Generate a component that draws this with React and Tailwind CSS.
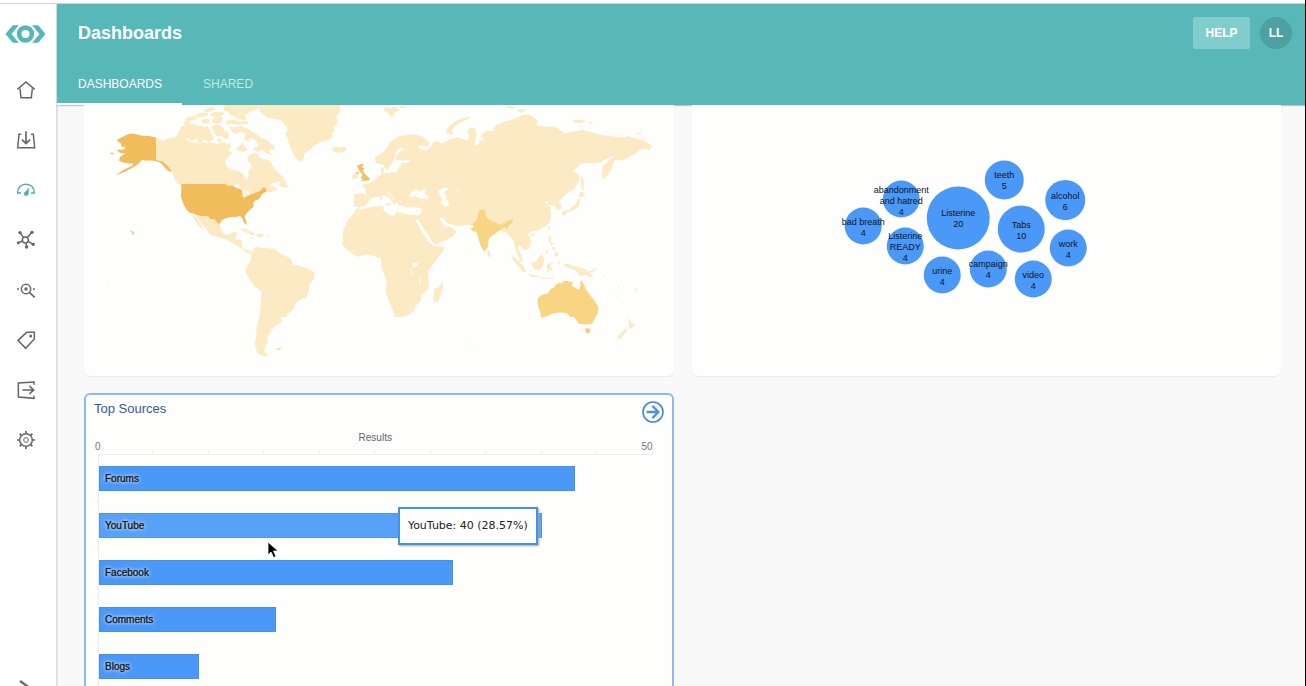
import React from "react";

const LAND = "#fbeac3";
const US = "#f1bc5c";
const MID = "#f8d583";
const SEA = "#fefefd";

const NAV = [
  {
    label: "Home",
    box: "48 237 60 60",
    art: (
      <>
        <path d="M52 265 78 243l26 22" />
        <path d="M60 263l3 27h31l3-27" />
      </>
    ),
  },
  {
    label: "Inbox",
    box: "48 387 60 60",
    art: (
      <>
        <path d="M64 400h-7l-4 40h51l-4-40h-7" />
        <path d="M78 391v37M66 416l12 12 12-12" strokeWidth="5" />
      </>
    ),
  },
  {
    label: "Dashboards",
    box: "48 540 60 60",
    active: true,
    art: (
      <>
        <path d="M63 579H53c-1-16 10-26 25-26s26 10 25 26H93" />
        <path d="M87 563l-2 20c-2 6-12 6-13-1 0-3 2-5 4-6z" fill="currentColor" strokeWidth="1" />
      </>
    ),
  },
  {
    label: "Network",
    box: "48 60 60 60",
    art: (
      <>
        <circle cx="76" cy="90" r="9" />
        <path d="M70 82 60 68M82 82l14-15M84 94l16 9M78 99l2 12M67 93l-12 5" />
        <g fill="currentColor" stroke="none">
          <circle cx="60" cy="68" r="5" />
          <circle cx="96" cy="67" r="5" />
          <circle cx="100" cy="103" r="5" />
          <circle cx="80" cy="111" r="5" />
          <circle cx="55" cy="98" r="4.5" />
        </g>
      </>
    ),
  },
  {
    label: "Search",
    box: "48 210 60 60",
    art: (
      <>
        <circle cx="78" cy="237" r="14" />
        <path d="M88 247l16 15" strokeWidth="5" />
        <g fill="currentColor" stroke="none">
          <circle cx="78" cy="237" r="5" />
          <circle cx="54" cy="237" r="3" />
          <circle cx="102" cy="237" r="3" />
        </g>
      </>
    ),
  },
  {
    label: "Tags",
    box: "48 360 60 60",
    art: (
      <>
        <path d="M54 391l26-24h23v20l-26 28z" />
        <circle cx="92" cy="378" r="4.5" fill="currentColor" stroke="none" />
      </>
    ),
  },
  {
    label: "Export",
    box: "48 512 60 60",
    art: (
      <>
        <path d="M102 526v-8l-47 3v42l47 4v-8" />
        <path d="M67 542h33M88 530l13 12-13 12" strokeWidth="5" />
      </>
    ),
  },
  {
    label: "Settings",
    box: "48 663 60 60",
    art: (
      <>
        <circle cx="78" cy="693" r="19" />
        <circle cx="78" cy="693" r="7" strokeWidth="3" />
        <path
          d="M78 673v-7M78 713v7M58 693h-7M98 693h7M64 679l-5-5M92 679l5-5M64 707l-5 5M92 707l5 5"
          strokeWidth="5"
        />
      </>
    ),
  },
];

const BUBBLES = [
  { x: 901, y: 199, r: 18.5, t: 190, lines: ["abandonment", "and hatred", "4"] },
  { x: 863, y: 226, r: 18.5, t: 222, lines: ["bad breath", "4"] },
  { x: 905, y: 246, r: 18.5, t: 236, lines: ["Listerine", "READY", "4"] },
  { x: 958, y: 218, r: 31.5, t: 213, lines: ["Listerine", "20"] },
  { x: 1004, y: 180, r: 19.5, t: 175, lines: ["teeth", "5"] },
  { x: 1021, y: 229, r: 23.5, t: 225, lines: ["Tabs", "10"] },
  { x: 1065, y: 200, r: 20, t: 196, lines: ["alcohol", "6"] },
  { x: 1068, y: 248, r: 18.5, t: 244, lines: ["work", "4"] },
  { x: 988, y: 269, r: 18.5, t: 264, lines: ["campaign", "4"] },
  { x: 942, y: 275, r: 18.5, t: 271, lines: ["urine", "4"] },
  { x: 1033, y: 279, r: 18.5, t: 275, lines: ["video", "4"] },
];

const MAX = 50;
const SOURCES = [
  { name: "Forums", value: 43 },
  { name: "YouTube", value: 40, hover: "YouTube: 40 (28.57%)" },
  { name: "Facebook", value: 32 },
  { name: "Comments", value: 16 },
  { name: "Blogs", value: 9 },
];

function Logo() {
  return (
    <svg viewBox="15 70 122 60" className="h-5 w-[41px]" fill="#56b7b8" aria-hidden="true">
      <path d="M38 74h18L34 100l22 26H38L16 100z" />
      <path d="M114 74H96l22 26-22 26h18l22-26z" />
      <circle cx="76" cy="100" r="28" fill="#fff" />
      <circle cx="76" cy="100" r="19" fill="none" stroke="#56b7b8" strokeWidth="14" />
    </svg>
  );
}

function Sidebar() {
  return (
    <aside className="flex w-[57px] shrink-0 flex-col border-r border-[#dcdcdc] bg-white">
      <a href="#top" aria-label="Overview" className="flex h-[61px] w-[51px] shrink-0 items-start justify-center pt-5">
        <Logo />
      </a>
      <nav className="flex flex-col" aria-label="Main">
        {NAV.map((n) => (
          <a
            key={n.label}
            href="#top"
            aria-label={n.label}
            className={
              "flex h-[50px] w-[52px] items-center justify-center " +
              (n.active ? "text-[#4fb0b2]" : "text-[#666]")
            }
          >
            <svg viewBox={n.box} className="size-5" fill="none" stroke="currentColor" strokeWidth="4.5">
              {n.art}
            </svg>
          </a>
        ))}
      </nav>
      <button type="button" aria-label="Expand menu" className="mt-auto flex h-[6px] w-[50px] items-start justify-center overflow-hidden">
        <svg viewBox="0 0 12 12" className="size-3 shrink-0" fill="none" stroke="#6b6b6b" strokeWidth="2.4">
          <path d="M1 1l7 5-7 5" />
        </svg>
      </button>
    </aside>
  );
}

function Header() {
  return (
    <header className="z-10 shrink-0 bg-[#58b8b8] text-white shadow-[0_1px_1px_#c4c4c4]">
      <div className="flex h-[58px] items-center justify-between pr-[13px] pl-[21px]">
        <h1 className="text-[18px] leading-6 font-bold">Dashboards</h1>
        <div className="flex items-center gap-[10px]">
          <button type="button" className="h-8 w-[57px] rounded-[2px] bg-[#81cccd] text-[12px] font-bold">
            HELP
          </button>
          <button type="button" className="size-8 rounded-full bg-[#4da1a2] text-[12px] font-bold">
            LL
          </button>
        </div>
      </div>
      <nav className="flex h-[43px] text-[12px]" aria-label="Views">
        <a href="#dashboards" className="flex items-center border-b-2 border-white pt-[2px] pr-5 pl-[21px]">
          DASHBOARDS
        </a>
        <a href="#shared" className="flex items-center border-b-2 border-transparent pt-[2px] pr-5 pl-[21px] text-[#bfe8e6]">
          SHARED
        </a>
      </nav>
    </header>
  );
}

function WorldMap() {
  return (
    <svg viewBox="84 105 590 271" className="h-[271px] w-full" role="img" aria-label="Results by country">
      <g transform="translate(84 100) scale(.33333)" fill={LAND}>
        {/* Canada */}
        <path d="M214 112 225 117 240 121 255 113 270 112 282 104 292 108 305 118 320 125 335 128 350 122 362 128 385 128 400 131 412 128 425 127 430 134 437 128 442 140 432 152 447 157 434 170 424 186 428 200 445 208 462 212 477 220 483 235 490 238 495 225 492 213 502 205 500 190 490 182 492 170 503 160 512 158 525 164 530 175 548 178 558 183 568 200 583 218 600 232 600 238 585 245 565 250 555 260 568 258 575 265 565 275 550 276 545 265 530 272 510 280 492 294 477 296 470 265 425 254 294 254 285 246 270 232 262 212 248 195 236 186 214 182Z" />
        <path d="M590 240 600 236 605 245 614 262 600 263 585 258ZM553 272 575 262 582 266 565 275 555 276ZM270 236 290 248 294 256 282 252Z" />
        <path d="M424 184 434 170 450 158 462 166 474 158 488 166 490 182 500 190 501 204 492 213 494 225 490 236 484 234 477 220 462 210 445 206 428 198Z" fill={SEA} />
        {/* Arctic islands */}
        <path d="M284 96l8-16 10-4 8-10 10 8 14-2 8 6 12-2 8 6 10-4 6 12 8 14 4 12-12 10-16-6-14 4-12-7-14 6-10-8-12 2-8-10-12-2z" />
        <path d="M296 72l8-8 12-2 6 6-12 6zM300 60l14-9 14-3 16 4-10 7-14 2-10 5zM330 48l10-8 16-3 18 3-4 7-16 4-10-2zM350 62l14-6 14 3-2 10-16 2zM358 32l14-8 20-2 2 8-18 4-8 4zM378 44l16-9 20 1 8 5-14 8-22 1zM384 60l10-8 14-3 10 4-4 12-12 6-14-2zM380 80l18-6 14 4 10 12-6 14-14 6-12-9-2-12zM412 106l10-14 10 4 4 14-10 8zM400 114l10 2 6 10-14 0z" />
        <path d="M418 15h112l-6 10-14 5-16 8-14 10 8 6-4 8-20-5-10-8-18-5-2-8-14-6z" />
        <path d="M428 62l16-4 20 6 26 0 6 6-24 4-22-2-22 1z" />
        <path d="M437 78 450 82 470 78 490 85 505 95 520 103 535 115 550 120 560 130 570 138 574 150 560 145 555 155 568 165 550 160 535 150 520 155 508 146 525 137 515 120 498 113 495 125 480 117 488 102 470 95 455 102 443 92Z" />
        <path d="M455 146 466 138 475 128 482 140 492 148 480 156 465 152Z" />
        {/* Greenland */}
        <path d="M528 15 770 15 768 35 758 50 763 68 748 80 753 92 743 100 748 112 733 120 708 127 688 140 678 150 663 160 657 182 648 184 635 172 625 155 615 130 612 115 605 100 612 90 605 75 590 60 565 55 550 52 535 40 524 25Z" />
        {/* Mexico and Central America */}
        <path d="M328 340 372 346 380 358 392 358 400 368 408 373 411 388 420 402 435 405 445 398 460 394 458 408 452 418 474 421 474 438 482 450 498 451 504 460 500 462 485 456 465 440 445 428 425 418 390 408 376 402 370 390 356 374 344 358Z" />
        <path d="M325 343 334 348 342 362 352 376 357 386 350 384 340 372 332 358Z" />
        <path d="M468 388l14-2 18 8 14 8-12 3-18-10zM520 401l14 0 8 6-12 5-12-3zM498 411l10 1-4 4zM548 408h7v3h-7z" />
        {/* United States */}
        <path
          fill={US}
          d="M292 252 425 252 433 257 450 256 466 263 474 272 476 290 480 294 492 288 510 280 530 272 538 262 547 265 547 275 535 282 530 290 525 298 515 301 508 308 510 320 500 328 488 340 482 350 487 363 488 375 480 368 475 354 468 348 455 352 440 351 430 353 418 358 410 365 408 373 400 368 392 358 380 358 372 348 350 348 330 341 315 337 305 325 297 308 291 290 292 270Z"
        />
        <path
          fill={US}
          d="M147 100 160 103 175 107 195 108 216 112 216 180 236 184 250 196 264 214 258 216 245 205 230 188 216 183 200 181 185 182 175 178 165 190 150 201 130 211 110 220 100 222 120 208 145 197 148 190 136 190 120 188 105 182 108 170 124 160 108 158 98 150 120 148 125 140 112 140 112 131 98 122 105 115 125 106 135 102Z"
        />
        <path fill={US} d="M78 159l9-1 4 4-8 1zM96 222l6-1-2 4zM137 393l8 1 7 8-5 3-2-7z" />
        <path fill={SEA} d="M446 258l14-6 12 10-8 4zM478 268l5 0 2 18-5 4zM486 272l12 2-4 10-6-4z" />
      </g>
      {/* South America */}
      <g transform="translate(84 230) scale(.33333)" fill={LAND}>
        <path d="M503 66 512 54 525 49 530 55 545 54 572 57 590 72 605 78 620 85 626 100 640 107 660 112 680 119 693 130 690 147 676 165 675 185 668 203 655 207 637 218 630 235 615 250 605 263 588 262 595 270 590 280 572 290 568 298 557 298 565 302 556 312 549 325 553 335 545 347 541 365 556 376 542 380 520 369 513 342 517 315 519 288 527 255 531 220 534 185 512 170 500 152 486 128 488 108 500 95Z" />
        <path d="M578 355l12-2 1 5-11 3zM72 162h3v2h-3z" fill="#f7dca0" />
        <path d="M620 103l8-3 5 6-8 3zM536 172l6 1 0 6z" fill={SEA} opacity=".6" />
      </g>
      {/* Europe, Africa, Asia and Oceania */}
      <g transform="translate(300 100) scale(.33333)" fill={LAND}>
        <path d="M163 283 185 280 200 284 198 264 184 255 200 252 212 248 225 240 235 228 246 224 243 210 243 200 252 204 252 220 265 218 290 217 297 203 305 195 302 188 318 189 332 183 330 178 305 182 290 180 288 165 300 155 315 148 308 143 296 146 288 158 283 175 275 192 265 208 257 208 250 193 240 192 228 188 226 170 245 160 260 145 275 123 300 108 325 104 350 103 370 110 388 127 385 140 360 138 352 136 365 150 382 150 390 142 398 136 400 128 412 122 425 130 450 118 475 112 500 120 508 118 505 90 515 82 528 86 530 108 524 133 532 138 538 130 540 120 553 122 545 104 560 92 578 94 590 74 615 64 640 58 670 45 690 44 715 62 710 75 740 80 765 80 785 92 795 101 815 95 850 90 890 100 915 106 940 109 972 112 982 108 1010 115 1035 123 1057 138 1050 152 1035 145 1020 150 1008 162 990 170 970 181 945 180 940 195 935 210 925 225 912 238 906 225 908 200 925 184 942 168 936 168 920 177 900 188 875 188 845 190 818 215 838 222 840 238 825 265 805 278 785 298 778 306 786 318 784 328 772 330 768 318 755 315 740 312 748 304 742 303 735 308 752 320 755 345 752 365 735 380 715 392 695 394 686 402 695 425 690 442 676 452 665 440 656 435 656 450 666 465 670 485 662 482 652 460 646 440 642 420 630 410 622 398 602 392 560 395 530 390 520 378 500 375 470 378 445 372 430 360 422 352 420 356 435 380 452 380 470 395 458 410 440 420 405 434 398 425 382 400 370 388 355 360 350 348 362 345 366 324 345 322 320 322 304 316 302 300 296 300 308 318 296 316 285 296 268 276 262 280 285 298 292 305 282 314 270 295 250 284 240 290 225 290 212 296 206 306 195 318 175 322 163 318Z" />
        <path d="M172 325 190 328 215 320 250 318 252 332 270 345 284 348 290 336 305 338 330 346 352 344 358 362 375 390 388 418 400 438 434 440 430 452 410 480 384 514 386 532 387 565 365 585 362 605 350 615 342 632 328 645 300 652 286 652 279 630 268 605 257 575 262 545 244 500 244 476 230 471 203 462 175 470 155 460 128 435 130 390 145 360 160 342Z" />
        {/* Inland seas */}
        <g fill={SEA}>
          <path d="M328 290 334 276 346 266 356 270 362 276 370 266 376 268 374 278 388 290 384 296 362 296 346 288 336 292Z" />
          <path d="M416 272l12-8 14-2 2 8-12 6 8 12 0 10 8 8-2 12-10 2-12-8 2-14-6-12z" />
          <path d="M422 350l10 6 10 12 22 8-8 6-18-3-10-14zM347 358l8 2 24 36 20 34-8 2-16-24-18-30zM472 268l6 4-8 6zM340 490l8-2 8 2-4 8-8 6-6-6z" />
          <path d="M332 505l6 10 4 14-6-6zM356 530l6 10 0 14-4-6z" />
        </g>
        {/* British Isles, Iceland and northern islands */}
        <path d="M158 226 166 218 174 222 176 232 162 238 157 234ZM97 143l12-4 12 4 12-4 8 8-8 8-16 4-14-5-6-6zM252 24l14-3 6 6 8-8 16 4 4 6-14 6-4 12-8 4-8-12-14-8zM296 18l26-2-2 6-16 2z" />
        <path d="M437 98 444 84 458 70 478 58 512 49 510 55 488 64 468 76 456 90 462 103 448 102Z" />
        <path fill="#f0c063" d="M171 198 178 194 188 190 191 193 187 202 194 204 190 214 198 224 205 231 210 234 208 241 196 242 182 244 190 238 182 234 188 228 186 220 180 216 176 206ZM169 216 177 215 176 222 170 221Z" />
        <path d="M616 16l20 0 12 8-14 3-10-4zM652 30l20-3 6 6-16 4zM816 63l18-5 22 4 0 5-22 2zM864 66l14-1 4 3-12 2zM838 78l12 0-4 4zM1008 100l14-3 4 3-10 3z" />
        {/* Mediterranean islands */}
        <path d="M242 285l5 2 0 10-5 4zM258 311l16-1-4 7-10-2zM345 332l10-3-3 6z" />
        {/* Japan, Sakhalin, Taiwan, Philippines */}
        <path d="M844 224l6 8 4 20-4 8 4 8-6 4-4-20zM838 288l4-14 8 4 8 6-10 7-6 0zM836 294l6 6-4 20-10 8-14 6-10 2-8 8-10-5 6-6 18-4 8-10 10-6zM788 338l10-3-2 12-6-3zM746 380l6-2-4 14-4-4zM692 404l12-3-2 8-8 0z" />
        <path d="M746 408l8 2 0 16 8 6-6 4-8-10zM756 440l8 2 4 8-8 0zM762 462l10-8 4 12-6 6zM736 460l10-12 2 2-8 12zM565 450l6 6 2 12-6 4-4-12z" />
        {/* India */}
        <path
          fill={MID}
          d="M538 332 550 327 558 334 557 346 565 358 590 368 603 374 612 370 622 364 640 358 638 368 628 376 622 388 614 380 602 390 585 402 568 415 565 440 553 456 542 435 535 410 530 395 520 394 512 386 522 380 518 372 530 362 534 348Z"
        />
        {/* Indonesia and New Guinea */}
        <path d="M634 466l14 8 22 22 10 20-10-1-16-18-12-16zM684 522l14 2 18 4 2 5-20-3zM722 532l26 2 18 0-2 3-40-1zM696 488l14-4 10-16 6-6 8 14-2 14-6 14-8 6-16-5-6-12zM740 498l6-8 16 0-12 5 6 6-2 2 8 12-6 0-6-8-2 10-5 2 2-12zM776 482l6 4-2 10-4-6zM792 494l14-4 10 8 20 2 24 8 12 12 10 14-14-4-12-6-14 4-6-8-14-12-16-4-10-4zM866 514l14-4 10-8-4 10-14 6zM898 518l6 5M910 524l8 6-6 0zM954 556l6 8-4 2zM944 584l10 7-2 2zM1004 570l10-6-2 6-6 4z" />
        {/* Madagascar and Kerguelen */}
        <path d="M428 546l3 8-8 32-8 20-10 2-6-12 4-18 0-10 14-6zM514 731l6 1-2 3z" />
        {/* Australia */}
        <path
          fill={MID}
          d="M714 596 724 586 746 580 754 566 762 564 768 554 780 548 788 550 792 542 802 543 820 546 816 556 828 564 838 570 842 560 842 545 846 540 852 552 860 570 874 588 884 602 896 620 896 636 888 652 880 668 876 672 858 674 838 672 830 660 822 650 812 652 802 640 786 638 764 640 744 648 724 654 722 638 714 612Z"
        />
        <path fill="#f3c978" d="M856 686h16l-2 12-8 4z" />
        {/* New Zealand */}
        <path d="M984 654 992 662 996 671 1008 671 1000 681 992 688 988 680 988 668ZM978 686 984 688 976 700 966 714 956 718 952 712 964 700Z" />
      </g>
    </svg>
  );
}

function BubbleChart() {
  return (
    <svg viewBox="692 105 589 271" className="h-[271px] w-full" role="img" aria-label="Top phrases">
      {BUBBLES.map((b) => (
        <circle key={b.x} cx={b.x} cy={b.y} r={b.r} fill="#4a98f7" />
      ))}
      <g className="text-[9px]" fill="#10151d" textAnchor="middle">
        {BUBBLES.map((b) =>
          b.lines.map((line, i) => (
            <text key={b.x + line} x={b.x} y={b.t + 3 + i * 11}>
              {line}
            </text>
          ))
        )}
      </g>
    </svg>
  );
}

function TopSources() {
  return (
    <section className="h-[330px] rounded-[6px] border-2 border-[#8fb8f1] bg-[#fefefd] pr-[19px] pl-[12px]">
      <div className="-mr-[11px] -ml-[4px] flex h-[38px] items-start justify-between pt-[6px]">
        <h2 className="text-[13px] leading-4 text-[#2f5b93]">Top Sources</h2>
        <button type="button" aria-label="Open Top Sources">
          <svg viewBox="0 0 22 22" className="size-[22px]" fill="none" stroke="#4187de">
            <circle cx="11" cy="11" r="10" strokeWidth="1.6" />
            <path d="M5.5 11h11M11 5.500l5.500 5.500-5.500 5.500" stroke="#4a90ea" strokeWidth="2.4" strokeLinecap="round" strokeLinejoin="round" />
          </svg>
        </button>
      </div>
      <p className="text-center text-[10px] leading-[10px] text-[#666]">Results</p>
      <div className="-ml-[3px] flex justify-between text-[10px] leading-[8px] text-[#777]">
        <span>0</span>
        <span>{MAX}</span>
      </div>
      <div className="grid h-[4px] grid-cols-10 border-b border-[#ececec]">
        {Array.from({ length: 10 }, (_, i) => (
          <span key={i} className="border-r border-[#ececec]" />
        ))}
      </div>
      <ul className="flex flex-col border-l border-[#ececec]">
        {SOURCES.map((s) => (
          <li key={s.name} className="relative flex h-[47px] items-center">
            <div
              className={
                "flex h-[25px] items-center border pl-[5px] text-[10px] text-[#15202e] " +
                (s.hover ? "border-[#4f97ec] bg-[#57a1f8]" : "border-[#4790ea] bg-[#4a98f7]")
              }
              style={{ width: (s.value / MAX) * 100 + "%" }}
            >
              <span className="[text-shadow:0_0_1px_#15202e,0_0_3px_#fff,0_0_4px_#fff]">{s.name}</span>
            </div>
            {s.hover && (
              <>
                <div
                  role="tooltip"
                  className="absolute top-[5px] left-[54%] flex h-[38px] items-center border-2 border-[#4a8fe0] bg-[#fefefd] px-2 font-['DejaVu_Sans',sans-serif] text-[11px] whitespace-nowrap text-[#222] shadow-[1px_1px_2px_#9aa]"
                >
                  {s.hover}
                </div>
                <svg viewBox="0 0 12 18" className="absolute top-[39px] left-[168px] z-10 h-[18px] w-3" aria-hidden="true">
                  <path d="M1 1v13l3-3 2.500 5.500 2.500-1-2.500-5.500h4.500z" fill="#000" stroke="#fff" strokeWidth=".8" />
                </svg>
              </>
            )}
            <span className="absolute bottom-0 -left-1 h-px w-1 bg-[#ececec]" />
          </li>
        ))}
      </ul>
    </section>
  );
}

export default function App() {
  return (
    <div className="flex h-screen flex-col overflow-hidden border-r border-black bg-white font-['Liberation_Sans',Arial,sans-serif]">
      <div className="h-1 shrink-0 border-b border-[#d5d5d5] bg-white" />
      <div className="flex min-h-0 flex-1">
        <Sidebar />
        <div className="flex min-w-0 flex-1 flex-col">
          <Header />
          <main className="grid min-h-0 flex-1 grid-cols-2 content-start gap-x-[18px] gap-y-[17px] overflow-hidden bg-[#f9f9f9] pr-6 pl-[27px] shadow-[inset_1px_0_0_#e6e6e6]">
            <section className="z-10 rounded-b-[6px] bg-[#fefefd] shadow-[0_1px_1px_#ebebeb]">
              <WorldMap />
            </section>
            <section className="z-10 rounded-b-[6px] bg-[#fefefd] shadow-[0_1px_1px_#ebebeb]">
              <BubbleChart />
            </section>
            <TopSources />
          </main>
        </div>
      </div>
    </div>
  );
}
